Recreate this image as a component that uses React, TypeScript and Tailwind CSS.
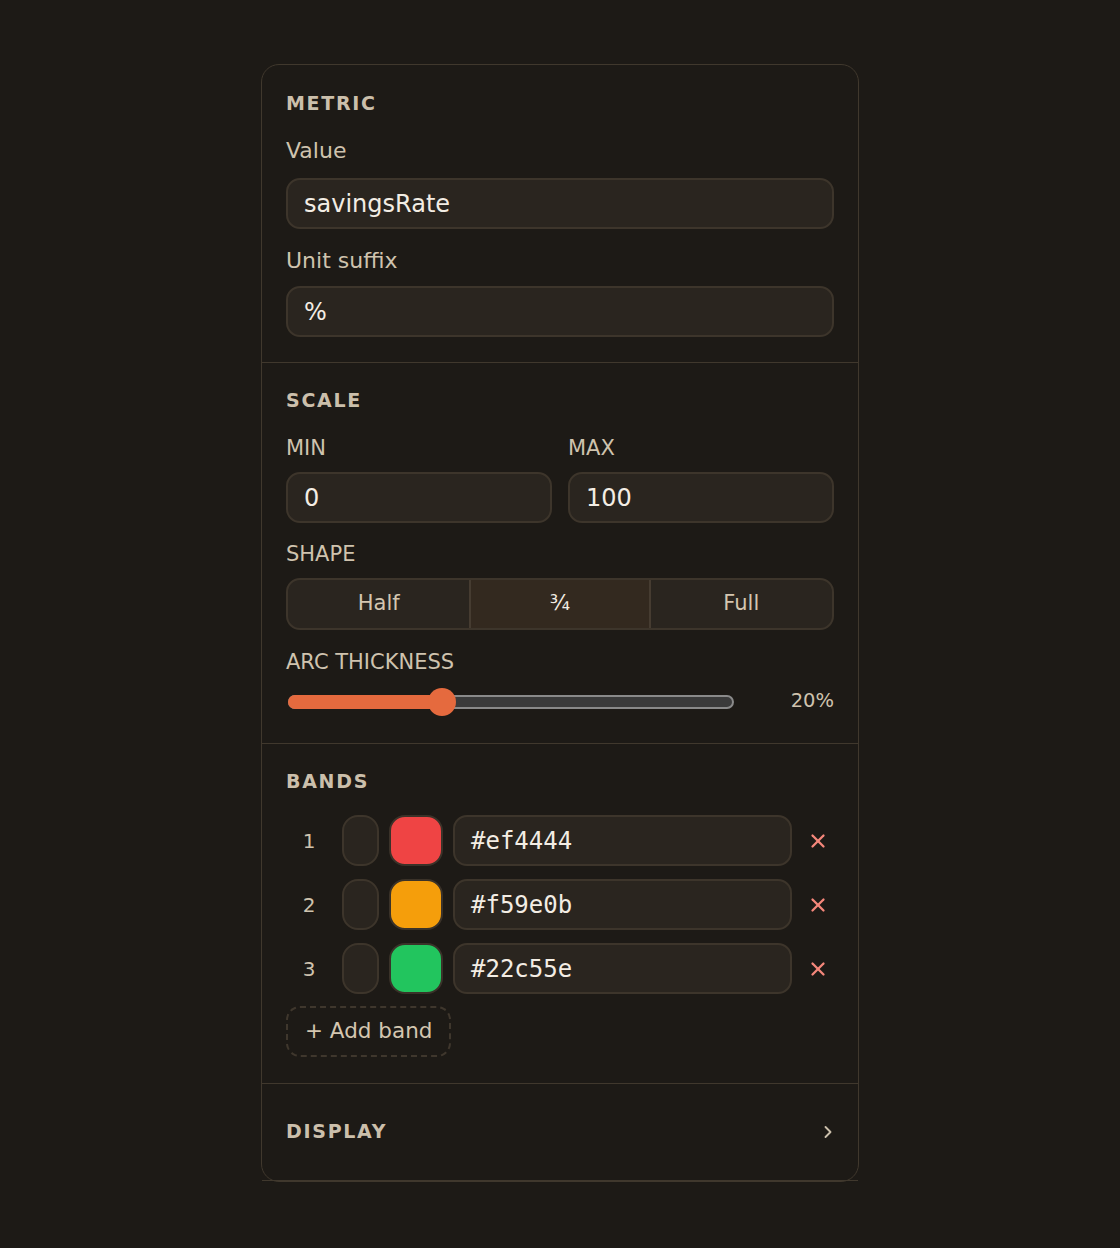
import { ChevronRight, X } from 'lucide-react';

const bands = [
  { id: 1, color: '#ef4444' },
  { id: 2, color: '#f59e0b' },
  { id: 3, color: '#22c55e' },
];

const font = { fontFamily: '"DejaVu Sans", "Liberation Sans", sans-serif' };

function Heading({ children }: { children: React.ReactNode }) {
  return (
    <div className="text-[19px] leading-[27px] font-bold tracking-[0.09em] text-[#cbbfab] uppercase">
      {children}
    </div>
  );
}

function TextInput({ value, mono }: { value: string; mono?: boolean }) {
  return (
    <div
      className="h-[51px] flex items-center rounded-[14px] bg-[#2a251f] border-2 border-[#3d352b] px-4 text-[24px] text-[#f3ede4]"
      style={mono ? { fontFamily: '"DejaVu Sans Mono", "Liberation Mono", monospace' } : undefined}
    >
      {value}
    </div>
  );
}

export default function App() {
  const thickness = 20;
  const pct = 34.5;
  return (
    <div className="min-h-[1248px] bg-[#1d1a16] pt-16 flex justify-center" style={font}>
      <div className="w-[598px] self-start rounded-[18px] border border-[#40382d] bg-[#1d1a16]">
        {/* metric */}
        <div className="px-6 pt-[25px] pb-[25px] border-b border-[#40382d]">
          <Heading>Metric</Heading>
          <div className="mt-[20px] text-[22px] leading-[28px] text-[#cfc3ae] mb-[13px]">Value</div>
          <TextInput value="savingsRate" />
          <div className="mt-[18px] text-[22px] leading-[28px] text-[#cfc3ae] mb-[11px]">Unit suffix</div>
          <TextInput value="%" />
        </div>

        {/* scale */}
        <div className="px-6 pt-6 pb-[25px] border-b border-[#40382d]">
          <Heading>Scale</Heading>
          <div className="mt-[20px] grid grid-cols-2 gap-4">
            <div>
              <div className="text-[21px] leading-[28px] text-[#cfc3ae] mb-[10px]">MIN</div>
              <TextInput value="0" />
            </div>
            <div>
              <div className="text-[21px] leading-[28px] text-[#cfc3ae] mb-[10px]">MAX</div>
              <TextInput value="100" />
            </div>
          </div>
          <div className="mt-[17px] text-[21px] leading-[28px] text-[#cfc3ae] mb-[10px]">SHAPE</div>
          <div className="h-[52px] grid grid-cols-3 rounded-[14px] border-2 border-[#3d352b] bg-[#2a251f] overflow-hidden">
            <div className="flex items-center justify-center text-[21px] text-[#d4c6b0]">Half</div>
            <div className="flex items-center justify-center text-[21px] text-[#f3ede4] bg-[#33291f] border-x-2 border-[#463c31]">
              ¾
            </div>
            <div className="flex items-center justify-center text-[21px] text-[#d4c6b0]">Full</div>
          </div>
          <div className="mt-[18px] text-[21px] leading-[28px] text-[#cfc3ae] mb-[10px]">ARC THICKNESS</div>
          <div className="h-8 flex items-center gap-3">
            <div className="relative flex-1 h-[14px] mx-[2px] rounded-full border-2 border-[#8a8a8a] bg-[#3b3b3b]">
              <div
                className="absolute -left-[2px] -top-[2px] -bottom-[2px] rounded-l-full bg-[#e56a3e]"
                style={{ width: `${pct}%` }}
              />
              <div
                className="absolute top-1/2 w-7 h-7 -mt-[14px] -ml-[14px] rounded-full bg-[#e56a3e]"
                style={{ left: `${pct}%` }}
              />
            </div>
            <div className="w-[86px] pb-[3px] text-right text-[19.5px] text-[#cfc3ae]">{thickness}%</div>
          </div>
        </div>

        {/* bands */}
        <div className="px-6 pt-6 pb-[26px] border-b border-[#40382d]">
          <Heading>Bands</Heading>
          <div className="mt-[20px] flex flex-col gap-[13px]">
            {bands.map((b) => (
              <div key={b.id} className="h-[51px] flex items-stretch gap-[10px]">
                <div className="w-[46px] flex items-center justify-center text-[20px] text-[#cfc3ae]">{b.id}</div>
                <div className="w-[37px] rounded-[16px] bg-[#2a251f] border-2 border-[#3d352b]" />
                <div className="w-[54px] rounded-[16px] border-2 border-[#3a3229]" style={{ background: b.color }} />
                <div className="flex-1">
                  <TextInput value={b.color} mono />
                </div>
                <div className="w-8 flex items-center justify-center text-[#f5877b]">
                  <X size={22} strokeWidth={2.5} />
                </div>
              </div>
            ))}
          </div>
          <button
            type="button"
            className="mt-3 h-[51px] px-[17px] rounded-[14px] border-2 border-dashed border-[#3f372d] text-[21.5px] text-[#d4c6b0]"
          >
            + Add band
          </button>
        </div>

        {/* display */}
        <div className="px-6 pt-[34px] pb-[35px] border-b border-[#40382d] flex items-center justify-between">
          <Heading>Display</Heading>
          <ChevronRight size={20} strokeWidth={2.25} className="text-[#cbbfab] -mr-[4px]" />
        </div>
      </div>
    </div>
  );
}
